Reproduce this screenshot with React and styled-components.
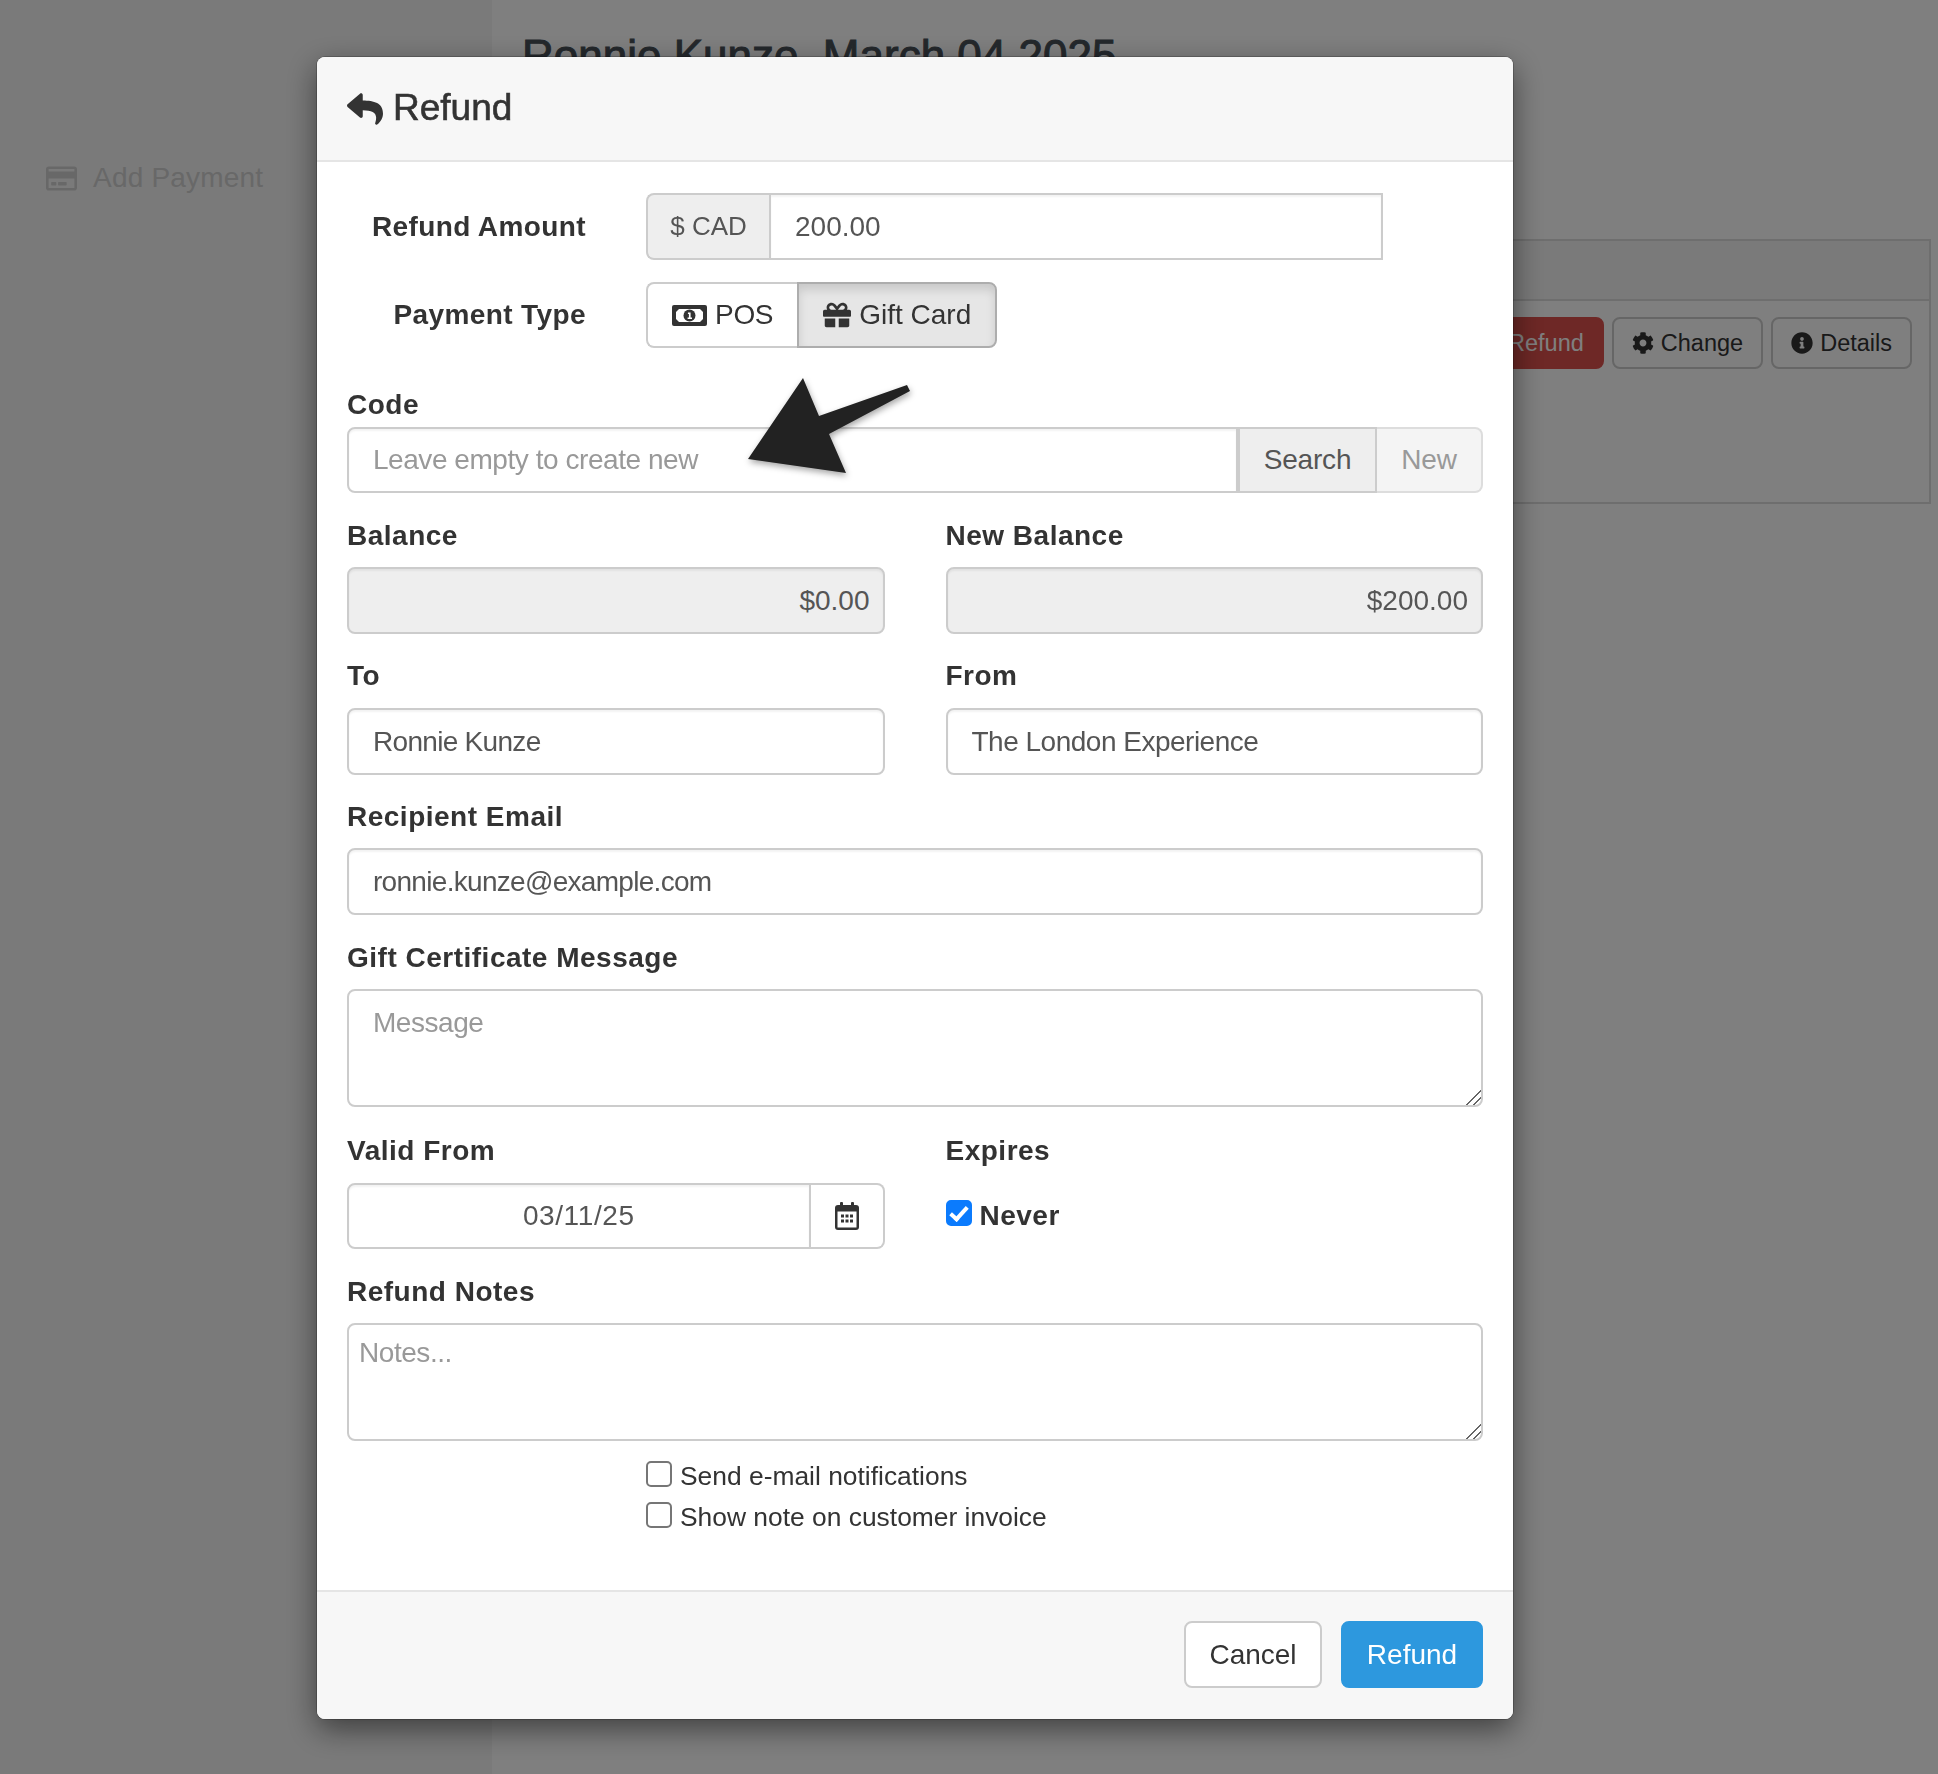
import React from 'react';
import styled, {createGlobalStyle} from 'styled-components';
import {FaReply, FaGift, FaCog, FaInfoCircle, FaRegCreditCard} from 'react-icons/fa';

const Global = createGlobalStyle`
    html, body {
        margin: 0;
        height: 100%;
        overflow: hidden;
    }
    body {
        font-family: "Liberation Sans", Arial, sans-serif;
        font-size: 28px;
        color: #333;
        background: #fff;
    }
    * {
        box-sizing: border-box;
    }
`;

const Page = styled.div`
    display: flex;
    height: 1774px;
`;

const Sidebar = styled.aside`
    width: 492px;
    flex: none;
    padding: 158px 0 0 46px;
    background: #f5f5f5;
`;

const SideLink = styled.div`
    display: flex;
    align-items: center;
    gap: 16px;
    height: 40px;
    color: #d0d0d0;
    font-size: 28px;
    letter-spacing: 0.2px;
`;

const Main = styled.main`
    flex: 1;
    padding: 32px 7px 0 30px;
`;

const Heading = styled.h2`
    margin: 0;
    font-size: 44px;
    font-weight: normal;
    line-height: 48px;
    color: #485058;
    -webkit-text-stroke: 1px #485058;
`;

const Panel = styled.section`
    margin-top: 159px;
    height: 265px;
    border: 2px solid #ddd;
`;

const PanelHead = styled.div`
    height: 60px;
    background: #f5f5f5;
    border-bottom: 2px solid #ddd;
`;

const PanelBody = styled.div`
    display: flex;
    justify-content: flex-end;
    gap: 8px;
    padding: 16px 17px 0 0;
`;

const SmallButton = styled.button`
    display: inline-flex;
    align-items: center;
    gap: 7px;
    height: 52px;
    padding: 0 18px;
    border: 2px solid ${props => props.$red ? '#dc504c' : '#ccc'};
    border-radius: 8px;
    background: ${props => props.$red ? '#dc504c' : '#fff'};
    color: ${props => props.$red ? '#fff' : '#333'};
    font: 23.5px "Liberation Sans", Arial, sans-serif;
`;

const Backdrop = styled.div`
    position: fixed;
    inset: 0;
    background: rgba(0, 0, 0, 0.5);
`;

const Modal = styled.div`
    width: 1196px;
    margin: 57px 0 0 317px;
    border-radius: 8px;
    background: #fff;
    box-shadow: 0 10px 30px rgba(0, 0, 0, 0.5), 0 0 0 1px rgba(0, 0, 0, 0.2);
    overflow: hidden;
`;

const ModalHeader = styled.header`
    display: flex;
    align-items: center;
    gap: 10px;
    height: 105px;
    padding: 0 30px;
    background: #f7f7f7;
    border-bottom: 2px solid #e5e5e5;
    color: #333;
`;

const ModalTitle = styled.h4`
    margin: 0 0 2px;
    font-size: 37px;
    font-weight: normal;
    -webkit-text-stroke: 0.6px #333;
`;

const ModalBody = styled.div`
    padding: 31px 30px 0;
    height: 1428px;
`;

const HRow = styled.div`
    display: flex;
    align-items: center;
    gap: 60px;
    margin-bottom: 22px;
`;

const HLabel = styled.label`
    width: 239px;
    padding-top: 1px;
    text-align: right;
    font-weight: bold;
    letter-spacing: 0.4px;
`;

const InputGroup = styled.div`
    display: flex;
    width: ${props => props.$width || '100%'};
`;

const Addon = styled.span`
    display: flex;
    align-items: center;
    justify-content: center;
    flex: none;
    width: ${props => props.$width};
    height: 66.5px;
    border: 2px solid #ccc;
    border-right: none;
    border-radius: 8px 0 0 8px;
    background: #eee;
    color: #555;
    font-size: 26px;
`;

const TextInput = styled.input`
    display: block;
    flex: 1;
    min-width: 0;
    width: 100%;
    height: 66.5px;
    padding: 1px ${props => props.$align === 'right' ? '13px' : '24px'} 0;
    border: 2px solid #ccc;
    border-radius: ${props => props.$radius || '8px'};
    background: ${props => props.readOnly ? '#eee' : '#fff'};
    color: #555;
    font: 28px "Liberation Sans", Arial, sans-serif;
    letter-spacing: ${props => props.$spacing || '-0.45px'};
    text-align: ${props => props.$align || 'left'};
    outline: none;
    box-shadow: inset 0 2px 2px rgba(0, 0, 0, 0.05);
    &::placeholder {
        color: #999;
        opacity: 1;
    }
`;

const Toggle = styled.div`
    display: flex;
`;

const ToggleButton = styled.button`
    display: flex;
    align-items: center;
    gap: 8px;
    height: 66.5px;
    padding: 1px 24px 0;
    border: 2px solid ${props => props.$active ? '#adadad' : '#ccc'};
    border-right-width: ${props => props.$active ? '2px' : '0'};
    border-radius: ${props => props.$active ? '0 8px 8px 0' : '8px 0 0 8px'};
    background: ${props => props.$active ? '#e6e6e6' : '#fff'};
    box-shadow: ${props => props.$active ? 'inset 0 6px 10px rgba(0, 0, 0, 0.125)' : 'none'};
    color: #333;
    font: 28px "Liberation Sans", Arial, sans-serif;
    letter-spacing: ${props => props.$active ? '0' : '-0.3px'};
`;

const Field = styled.div`
    margin-top: ${props => props.$top || '22.5px'};
`;

const FieldLabel = styled.label`
    display: block;
    height: 40px;
    margin-bottom: ${props => props.$gap || '11px'};
    font-weight: bold;
    line-height: 40px;
    letter-spacing: 0.5px;
`;

const TwoCols = styled.div`
    display: grid;
    grid-template-columns: 1fr 1fr;
    gap: 61px;
`;

const GroupButton = styled.button`
    flex: none;
    width: ${props => props.$width};
    height: 66.5px;
    padding: 1px 0 0;
    border: 2px solid ${props => props.$faded ? '#ddd' : '#ccc'};
    border-left: ${props => props.$faded ? 'none' : '2px solid #ccc'};
    border-radius: ${props => props.$faded ? '0 8px 8px 0' : '0'};
    background: ${props => props.$faded ? '#f4f4f4' : '#eee'};
    color: ${props => props.$faded ? '#999' : '#555'};
    font: 28px "Liberation Sans", Arial, sans-serif;
    letter-spacing: -0.2px;
`;

const TextArea = styled.textarea`
    display: block;
    width: 100%;
    height: 118.5px;
    padding: ${props => props.$pad};
    border: 2px solid #ccc;
    border-radius: 8px;
    color: #555;
    font: 28px "Liberation Sans", Arial, sans-serif;
    letter-spacing: -0.45px;
    outline: none;
    &::placeholder {
        color: #999;
        opacity: 1;
    }
    &::-webkit-resizer {
        background: linear-gradient(135deg, transparent 48%, #666 48%, #666 56%, transparent 56%, transparent 72%, #666 72%, #666 80%, transparent 80%);
    }
`;

const CalendarAddon = styled.span`
    display: flex;
    align-items: center;
    justify-content: center;
    flex: none;
    width: 74px;
    height: 66.5px;
    border: 2px solid #ccc;
    border-left: none;
    border-radius: 0 8px 8px 0;
    color: #333;
`;

const CheckRow = styled.label`
    display: flex;
    align-items: flex-start;
    gap: 8px;
    height: ${props => props.$bold ? '32px' : '41px'};
    font-size: ${props => props.$bold ? '28px' : '26.4px'};
    font-weight: ${props => props.$bold ? 'bold' : 'normal'};
    line-height: ${props => props.$bold ? '32px' : '30px'};
    letter-spacing: ${props => props.$bold ? '0.5px' : '0'};
`;

const Check = styled.input`
    appearance: none;
    position: relative;
    flex: none;
    width: 26px;
    height: 26px;
    margin: 0;
    border: 2px solid ${props => props.checked ? '#0b7bfd' : '#767676'};
    border-radius: 5px;
    background: ${props => props.checked ? '#0b7bfd' : '#fff'};
    &:checked::after {
        content: "";
        position: absolute;
        left: 6px;
        top: 1px;
        width: 6px;
        height: 14px;
        border: solid #fff;
        border-width: 0 4px 4px 0;
        transform: rotate(42deg);
    }
`;

const CheckList = styled.div`
    margin: 20px 0 0 299px;
`;

const ModalFooter = styled.footer`
    display: flex;
    justify-content: flex-end;
    gap: 19px;
    height: 129px;
    padding: 29px 30px 0;
    background: #f7f7f7;
    border-top: 2px solid #e5e5e5;
`;

const FooterButton = styled.button`
    height: 67px;
    width: ${props => props.$width};
    padding: 0;
    border: 2px solid ${props => props.$primary ? '#2d98de' : '#ccc'};
    border-radius: 8px;
    background: ${props => props.$primary ? '#2d98de' : '#fff'};
    color: ${props => props.$primary ? '#fff' : '#333'};
    font: 28px "Liberation Sans", Arial, sans-serif;
`;

const Arrow = styled.svg`
    position: absolute;
    left: 740px;
    top: 370px;
    filter: drop-shadow(1px 3px 3px rgba(0, 0, 0, 0.35));
`;

const MoneyIcon = () => (
    <svg width="35" height="21" viewBox="0 0 35 21">
        <rect width="35" height="21" rx="2" fill="#333" />
        <path d="M7 4H28L31 7V14L28 17H7L4 14V7Z" fill="#fff" />
        <circle cx="17.5" cy="10.5" r="6" fill="#333" />
        <path d="M16 7.5h2.6v5H20v1.4h-4.4v-1.4h1.3V9h-1z" fill="#fff" />
    </svg>
);

const CalendarIcon = () => (
    <svg width="24" height="28" viewBox="0 0 24 28">
        <rect x="5" y="0" width="3" height="6" rx="1" fill="#333" />
        <rect x="16" y="0" width="3" height="6" rx="1" fill="#333" />
        <rect x="0" y="3" width="24" height="25" rx="3" fill="#333" />
        <rect x="2.5" y="9.5" width="19" height="16" fill="#fff" />
        {[6, 10.5, 15].map(x => [12.5, 17.5].map(y => (
            <rect key={x + '-' + y} x={x} y={y} width="3" height="3" fill="#333" />
        )))}
    </svg>
);

export default class App extends React.Component {
    render() {
        return (
            <Page>
                <Global />
                <Sidebar>
                    <SideLink><FaRegCreditCard size={31} />Add Payment</SideLink>
                </Sidebar>
                <Main>
                    <Heading>Ronnie Kunze, March 04 2025</Heading>
                    <Panel>
                        <PanelHead />
                        <PanelBody>
                            <SmallButton $red>Refund</SmallButton>
                            <SmallButton><FaCog size={22} />Change</SmallButton>
                            <SmallButton><FaInfoCircle size={22} />Details</SmallButton>
                        </PanelBody>
                    </Panel>
                </Main>
                <Backdrop>
                    <Modal>
                        <ModalHeader>
                            <FaReply size={36} />
                            <ModalTitle>Refund</ModalTitle>
                        </ModalHeader>
                        <ModalBody>
                            <HRow>
                                <HLabel>Refund Amount</HLabel>
                                <InputGroup $width="737px">
                                    <Addon $width="123px">$ CAD</Addon>
                                    <TextInput defaultValue="200.00" $radius="0" $spacing="0" />
                                </InputGroup>
                            </HRow>
                            <HRow>
                                <HLabel>Payment Type</HLabel>
                                <Toggle>
                                    <ToggleButton><MoneyIcon />POS</ToggleButton>
                                    <ToggleButton $active><FaGift size={28} />Gift Card</ToggleButton>
                                </Toggle>
                            </HRow>
                            <Field $top="37px">
                                <FieldLabel $gap="1.5px">Code</FieldLabel>
                                <InputGroup>
                                    <TextInput placeholder="Leave empty to create new" $radius="8px 0 0 8px" />
                                    <GroupButton $width="139px">Search</GroupButton>
                                    <GroupButton $width="106px" $faded>New</GroupButton>
                                </InputGroup>
                            </Field>
                            <TwoCols>
                                <Field $top="23px">
                                    <FieldLabel>Balance</FieldLabel>
                                    <TextInput readOnly value="$0.00" $align="right" $spacing="0" />
                                </Field>
                                <Field $top="23px">
                                    <FieldLabel>New Balance</FieldLabel>
                                    <TextInput readOnly value="$200.00" $align="right" $spacing="0" />
                                </Field>
                            </TwoCols>
                            <TwoCols>
                                <Field>
                                    <FieldLabel $gap="12px">To</FieldLabel>
                                    <TextInput defaultValue="Ronnie Kunze" $spacing="-0.7px" />
                                </Field>
                                <Field>
                                    <FieldLabel $gap="12px">From</FieldLabel>
                                    <TextInput defaultValue="The London Experience" $spacing="-0.5px" />
                                </Field>
                            </TwoCols>
                            <Field>
                                <FieldLabel>Recipient Email</FieldLabel>
                                <TextInput defaultValue="ronnie.kunze@example.com" $spacing="-0.7px" />
                            </Field>
                            <Field $top="23.5px">
                                <FieldLabel $gap="10.5px">Gift Certificate Message</FieldLabel>
                                <TextArea placeholder="Message" $pad="16px 24px" />
                            </Field>
                            <TwoCols>
                                <Field $top="24px">
                                    <FieldLabel $gap="11.5px">Valid From</FieldLabel>
                                    <InputGroup>
                                        <TextInput defaultValue="03/11/25" $align="center" $radius="8px 0 0 8px" $spacing="0.6px" />
                                        <CalendarAddon><CalendarIcon /></CalendarAddon>
                                    </InputGroup>
                                </Field>
                                <Field $top="24px">
                                    <FieldLabel $gap="29px">Expires</FieldLabel>
                                    <CheckRow $bold>
                                        <Check type="checkbox" checked readOnly />
                                        Never
                                    </CheckRow>
                                </Field>
                            </TwoCols>
                            <Field>
                                <FieldLabel>Refund Notes</FieldLabel>
                                <TextArea placeholder="Notes..." $pad="12px 10px" />
                            </Field>
                            <CheckList>
                                <CheckRow><Check type="checkbox" />Send e-mail notifications</CheckRow>
                                <CheckRow><Check type="checkbox" />Show note on customer invoice</CheckRow>
                            </CheckList>
                        </ModalBody>
                        <ModalFooter>
                            <FooterButton $width="138px">Cancel</FooterButton>
                            <FooterButton $width="142px" $primary>Refund</FooterButton>
                        </ModalFooter>
                    </Modal>
                    <Arrow width="180" height="115" viewBox="0 0 180 115">
                        <path d="M8 89L63 8L79 46L167 15L170 21L89 64L106 103Z" fill="#222" />
                    </Arrow>
                </Backdrop>
            </Page>
        );
    }
}
